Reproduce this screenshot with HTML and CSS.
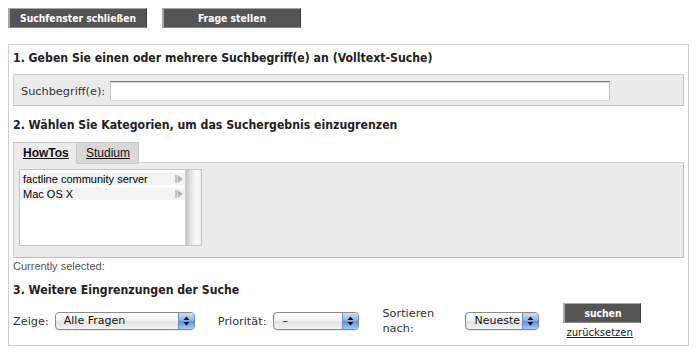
FILE: index.html
```html
<!DOCTYPE html>
<html lang="de">
<head>
<meta charset="utf-8">
<title>Suche</title>
<link rel="stylesheet" href="styles.css">
</head>
<body>
<div class="topbar">
  <button class="btn btn-close" type="button">Suchfenster schließen</button>
  <button class="btn btn-ask" type="button">Frage stellen</button>
</div>
<div class="search">
  <h2 class="heading">1. Geben Sie einen oder mehrere Suchbegriff(e) an (Volltext-Suche)</h2>
  <div class="term-box">
    <label class="label" for="term">Suchbegriff(e):</label>
    <input class="term-input" id="term" type="text">
  </div>
  <h2 class="heading heading-2">2. Wählen Sie Kategorien, um das Suchergebnis einzugrenzen</h2>
  <div class="tabs">
    <a class="tab tab-active" href="#">HowTos</a><a class="tab" href="#">Studium</a>
  </div>
  <div class="tab-panel">
    <div class="listbox">
      <ul class="list">
        <li class="list-item"><span>factline community server</span><svg class="arrow" width="8" height="8" viewBox="0 0 8 8"><rect x="0" y="0" width="2" height="8" fill="#c4c4c4"/><polygon points="2.5,0 8,4 2.5,8" fill="#b4b4b4"/></svg></li>
        <li class="list-item"><span>Mac OS X</span><svg class="arrow" width="8" height="8" viewBox="0 0 8 8"><rect x="0" y="0" width="2" height="8" fill="#c4c4c4"/><polygon points="2.5,0 8,4 2.5,8" fill="#b4b4b4"/></svg></li>
      </ul>
      <div class="scrollbar"></div>
    </div>
  </div>
  <p class="selected">Currently selected:</p>
  <h2 class="heading heading-3">3. Weitere Eingrenzungen der Suche</h2>
  <div class="filters">
    <span class="label">Zeige:</span>
    <div class="select select-show"><span class="select-text">Alle Fragen</span><span class="stepper"><svg width="7" height="10" viewBox="0 0 7 10"><polygon points="3.5,0.5 6.5,4 0.5,4" fill="#111"/><polygon points="0.5,6 6.5,6 3.5,9.5" fill="#111"/></svg></span></div>
    <span class="label label-prio">Priorität:</span>
    <div class="select select-prio"><span class="select-text">–</span><span class="stepper"><svg width="7" height="10" viewBox="0 0 7 10"><polygon points="3.5,0.5 6.5,4 0.5,4" fill="#111"/><polygon points="0.5,6 6.5,6 3.5,9.5" fill="#111"/></svg></span></div>
    <span class="label label-sort">Sortieren<br>nach:</span>
    <div class="select select-sort"><span class="select-text">Neueste</span><span class="stepper"><svg width="7" height="10" viewBox="0 0 7 10"><polygon points="3.5,0.5 6.5,4 0.5,4" fill="#111"/><polygon points="0.5,6 6.5,6 3.5,9.5" fill="#111"/></svg></span></div>
    <div class="actions">
      <button class="btn btn-search" type="button">suchen</button>
      <a class="reset" href="#">zurücksetzen</a>
    </div>
  </div>
</div>
</body>
</html>
```
FILE: styles.css
```css
html, body {
  margin: 0;
  padding: 0;
  background: #fff;
}
body {
  margin: 8px;
  font-family: "DejaVu Sans", "Open Sans", sans-serif;
  color: #222;
}
.topbar {
  display: flex;
  gap: 15px;
  height: 20px;
}
.btn {
  box-sizing: border-box;
  height: 20px;
  margin: 0;
  padding: 0;
  background: #555;
  color: #fff;
  font-family: "DejaVu Sans Condensed", "DejaVu Sans", sans-serif;
  font-weight: bold;
  font-size: 10.3px;
  border: 1px solid;
  border-color: #a8a8a8 #3c3c3c #8a8a8a #a8a8a8;
  border-left-width: 2px;
  cursor: pointer;
}
.btn-close { width: 139px; }
.btn-ask { width: 139px; }
.btn-search { width: 78px; }

.search {
  margin-top: 16px;
  border: 1px solid #cfcfcf;
  padding: 6px 4px 6px 4px;
}
.heading {
  margin: 0;
  font-family: "DejaVu Sans Condensed", "DejaVu Sans", sans-serif;
  font-weight: bold;
  font-size: 12.2px;
  line-height: 14px;
  color: #222;
}
.term-box {
  margin-top: 9px;
  display: flex;
  align-items: center;
  gap: 5px;
  background: #ebebeb;
  border: 1px solid #d0d0d0;
  border-right-color: #c4c4c4;
  border-bottom-color: #c4c4c4;
  padding: 6px 7px 4px 7px;
}
.label {
  font-size: 11.3px;
  color: #333;
  line-height: 15px;
}
.term-input {
  box-sizing: border-box;
  width: 500px;
  height: 20px;
  margin: 0;
  padding: 0 3px;
  background: #fff;
  border: 1px solid;
  border-color: #7c7c7c #c3c3c3 #dadada #c3c3c3;
  box-shadow: inset 0 1px 0 #d8d8d8;
  outline: none;
}
.heading-2 { margin-top: 12px; }

.tabs {
  margin-top: 10px;
  display: flex;
  height: 21px;
  margin-bottom: -1px;
  position: relative;
}
.tab {
  box-sizing: border-box;
  height: 22px;
  line-height: 20px;
  padding: 0 8px 0 8px;
  font-family: "Liberation Sans", Arial, sans-serif;
  font-size: 12px;
  color: #111;
  text-decoration: underline;
  background: #d8d8d8;
  border: 1px solid #c8c8c8;
}
.tab + .tab { border-left: none; width: 62px; padding-left: 9px; }
.tab-active {
  background: #ebebeb;
  font-weight: bold;
  border-bottom-color: #ebebeb;
  width: 64px;
  padding-left: 9px;
}
.tab-panel {
  background: #ebebeb;
  border: 1px solid #d4d4d4;
  border-right-color: #bdbdbd;
  border-bottom-color: #bdbdbd;
  padding: 6px 5px 11px 5px;
}
.listbox {
  display: flex;
  width: 183px;
  height: 77px;
  box-sizing: border-box;
  border: 1px solid #c6c6c6;
  background: #fff;
}
.list {
  list-style: none;
  margin: 0;
  padding: 3px 0 0 0;
  flex: 1;
  display: flex;
  flex-direction: column;
  gap: 3px;
}
.list-item {
  display: flex;
  align-items: center;
  justify-content: space-between;
  height: 12px;
  background: #f3f3f3;
  padding: 0 2px 0 3px;
  font-family: "Liberation Sans", Arial, sans-serif;
  font-size: 11px;
  line-height: 12px;
  color: #000;
}
.arrow { display: block; }
.scrollbar {
  width: 15px;
  background: linear-gradient(to right, #c4c4c4 0%, #dedede 25%, #f4f4f4 55%, #fafafa 75%, #ececec 100%);
  border-left: 1px solid #d0d0d0;
}
.selected {
  margin: 2px 0 0 0;
  font-family: "Liberation Sans", Arial, sans-serif;
  font-size: 11px;
  line-height: 12px;
  color: #555;
}
.heading-3 { margin-top: 11px; }

.filters {
  margin-top: 6px;
  display: flex;
  align-items: center;
}
.select {
  box-sizing: border-box;
  display: flex;
  height: 18px;
  border: 1px solid #8a8a8a;
  border-radius: 4px;
  overflow: hidden;
  background: linear-gradient(to bottom, #ffffff 0%, #f4f4f4 45%, #e4e4e4 55%, #f2f2f2 100%);
  box-shadow: 0 1px 0 rgba(0,0,0,0.08);
  margin-left: 6px;
}
.select-text {
  flex: 1;
  padding-left: 8px;
  font-size: 11px;
  line-height: 16px;
  color: #111;
}
.stepper {
  width: 15px;
  display: flex;
  align-items: center;
  justify-content: center;
  border-left: 1px solid #6f8fc0;
  background: linear-gradient(to bottom, #c9def8 0%, #8fb8ee 45%, #5b93e0 55%, #a6cbf6 100%);
}
.select-show { width: 140px; }
.select-prio { width: 86px; margin-left: 7px; }
.select-sort { width: 74px; margin-left: 7px; }
.label-prio { margin-left: 23px; }
.label-sort { margin-left: 23px; width: 76px; }
.actions {
  margin-left: 24px;
  display: flex;
  flex-direction: column;
  gap: 3px;
}
.reset {
  padding-left: 3px;
  font-size: 10px;
  line-height: 13px;
  color: #222;
  text-decoration: underline;
}
```
